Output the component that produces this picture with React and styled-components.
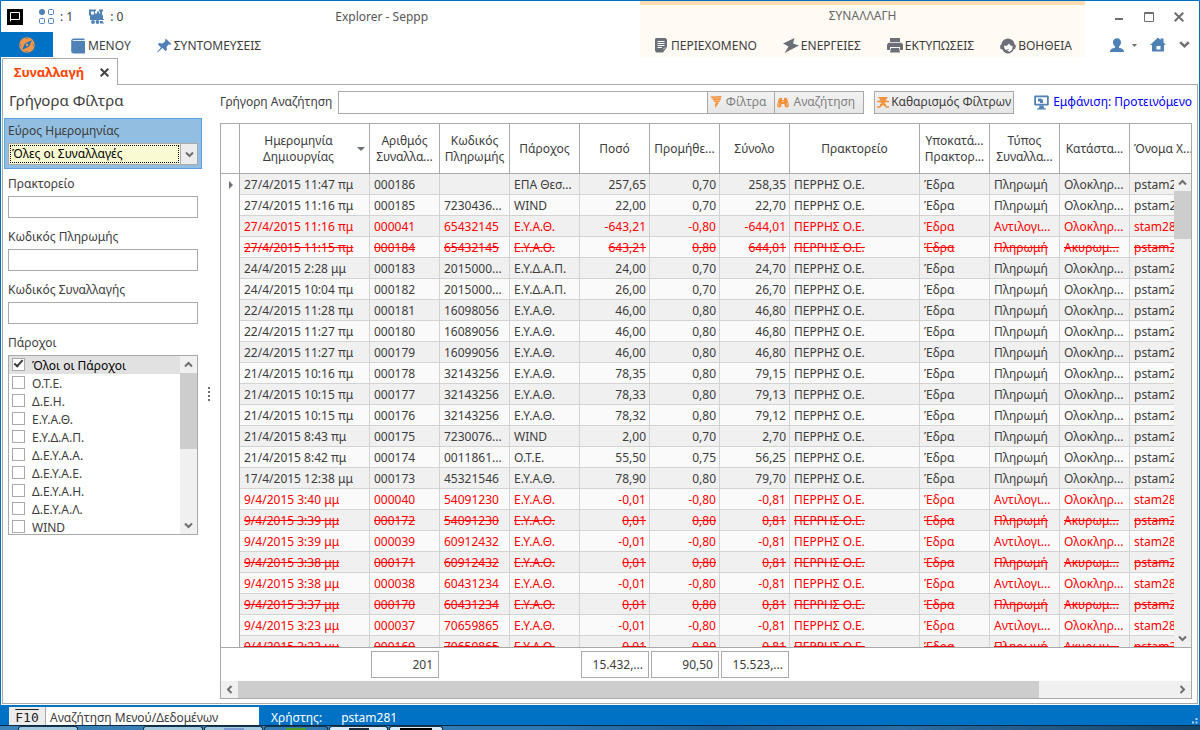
import React from "react";
import styled, { createGlobalStyle, css } from "styled-components";

const c = {
  blue: "#0072c6",
  line: "#a9a9a9",
  cellLine: "#d3d3d3",
  text: "#3c3c3c",
  icon: "#4f81b5",
  gray: "#6b7078",
  orange: "#f0923e",
  track: "#f0f0f0",
  thumb: "#cdcdcd",
};

const Global = createGlobalStyle`
  *, *::before, *::after { box-sizing: border-box; }
  body { margin: 0; background: #fff; }
  body, button, input, select, table {
    font: 12px/16px "Noto Sans", "DejaVu Sans", sans-serif;
    color: ${c.text};
  }
  button { margin: 0; padding: 0; border: 0; background: none; }
  svg { display: block; flex: none; }
`;

const Desktop = styled.div`
  display: flex;
  flex-direction: column;
  height: 100vh;
  min-height: 480px;
  overflow: hidden;
`;

const AppWindow = styled.div`
  flex: 1;
  min-height: 0;
  display: flex;
  flex-direction: column;
  border: solid ${c.blue};
  border-width: 1px 1px 0;
`;

/* ---------- title bar and ribbon ---------- */

const Header = styled.header`
  display: flex;
  height: 56px;
`;

const HeaderMain = styled.div`
  flex: 1;
  min-width: 0;
`;

const TitleBar = styled.div`
  display: flex;
  align-items: center;
  height: 31px;
  padding-left: 6px;
`;

const Counter = styled.span`
  display: flex;
  align-items: center;
  gap: 6px;
  margin-left: 16px;
`;

const WindowTitle = styled.h1`
  flex: 1;
  margin: 0;
  text-align: center;
  font-size: 12px;
  line-height: 16px;
  font-weight: 400;
  color: #555;
`;

const MenuBar = styled.nav`
  display: flex;
  align-items: center;
  height: 25px;
`;

const StartButton = styled.button`
  display: grid;
  place-items: center;
  width: 52px;
  height: 25px;
  background: ${c.blue};
`;

const MenuButton = styled.button`
  display: flex;
  align-items: center;
  gap: ${(p) => p.$gap || 2}px;
  margin-left: ${(p) => p.$before || 0}px;
  padding-top: 2px;
  white-space: nowrap;
`;

const ContextRibbon = styled.div`
  width: 445px;
  border-top: 4px solid #ffdcb2;
  background: #fffaf3;
`;

const ContextTitle = styled.div`
  height: 27px;
  padding-top: 3px;
  text-align: center;
  color: #666;
`;

const ContextMenu = styled.nav`
  display: flex;
  align-items: center;
  justify-content: space-between;
  height: 25px;
  padding: 0 13px 0 14px;
`;

const HeaderTools = styled.div`
  width: 114px;
`;

const ToolRow = styled.div`
  display: flex;
  align-items: center;
  justify-content: space-between;
  height: ${(p) => p.$height}px;
  padding: 0 ${(p) => p.$right}px 0 ${(p) => p.$left}px;
`;

/* ---------- tabs and work area ---------- */

const TabStrip = styled.div`
  display: flex;
  height: 28px;
  padding: 1px 1px 0;
`;

const Tab = styled.div`
  display: flex;
  align-items: center;
  justify-content: space-between;
  width: 116px;
  padding: 0 8px 0 11px;
  border: 1px solid ${c.line};
  border-bottom: 0;
`;

const TabLabel = styled.strong`
  font-size: 13px;
  color: #ff4500;
`;

const TabRest = styled.div`
  flex: 1;
  border-bottom: 1px solid ${c.line};
`;

const WorkArea = styled.main`
  flex: 1;
  min-height: 0;
  display: flex;
  margin: 0 1px 1px;
  border: 1px solid ${c.line};
  border-top: 0;
`;

/* ---------- filters ---------- */

const Filters = styled.aside`
  width: 199px;
  padding-left: 1px;
`;

const FiltersTitle = styled.h2`
  height: 33px;
  margin: 0;
  padding: 4px 0 0 5px;
  font-size: 15px;
  line-height: 22px;
  font-weight: 400;
`;

const FieldGroup = styled.div`
  display: flex;
  flex-direction: column;
  gap: 4px;
  padding: 4px 3px 3px;
  border: 1px solid transparent;
  ${(p) =>
    p.$active &&
    css`
      border-color: #5e9fe2;
      background: #92bfe1;
    `}
  & + & {
    padding-top: 6px;
  }
`;

const TextInput = styled.input`
  width: 190px;
  height: 22px;
  padding: 0 3px;
  border: 1px solid ${c.line};
  background: #fff;
  outline: none;
`;

const SelectBox = styled.div`
  display: flex;
  width: 190px;
  height: 22px;
  border: 1px solid ${c.line};
  background: #fafad2;
`;

const Select = styled.select`
  flex: 1;
  min-width: 0;
  appearance: none;
  margin: 1px;
  padding: 0 1px;
  border: 1px dotted #000;
  border-radius: 0;
  background: #fafad2;
  color: #000;
  outline: none;
`;

const SelectArrow = styled.span`
  display: grid;
  place-items: center;
  width: 17px;
  border-left: 1px solid ${c.line};
  background: #ececec;
`;

const ListBox = styled.div`
  display: flex;
  width: 190px;
  height: 180px;
  border: 1px solid ${c.line};
`;

const Items = styled.div`
  flex: 1;
  overflow: hidden;
`;

const Item = styled.label`
  display: flex;
  gap: 7px;
  height: 18px;
  padding-left: 3px;
  line-height: 20px;
  ${(p) =>
    p.$selected &&
    css`
      background: #e1e1e1;
      color: #000;
    `}
`;

const Check = styled.input`
  appearance: none;
  position: relative;
  width: 13px;
  height: 13px;
  margin: 2px 0 0;
  border: 1px solid ${c.line};
  background: #fff;
  &:checked::after {
    content: "";
    position: absolute;
    left: 1px;
    top: 1px;
    width: 9px;
    height: 5px;
    border: solid #3c3c3c;
    border-width: 0 0 2px 2px;
    transform: rotate(-48deg);
  }
`;

const Splitter = styled.div`
  display: flex;
  flex-direction: column;
  justify-content: center;
  align-items: center;
  gap: 2px;
  width: 18px;
  padding-right: 4px;
`;

const Dot = styled.i`
  width: 2px;
  height: 2px;
  background: ${c.gray};
`;

/* ---------- scroll bars ---------- */

const ScrollBar = styled.div`
  display: flex;
  flex-direction: ${(p) => (p.$horizontal ? "row" : "column")};
  ${(p) => (p.$horizontal ? "height: 17px;" : "width: 17px;")}
  background: ${c.track};
`;

const ScrollArrow = styled.button`
  display: grid;
  place-items: center;
  width: 17px;
  height: 17px;
`;

const ScrollTrack = styled.div`
  flex: 1;
  display: flex;
  flex-direction: inherit;
`;

const ScrollThumb = styled.div`
  flex: 0 0 ${(p) => p.$size}%;
  background: ${c.thumb};
`;

/* ---------- search bar ---------- */

const Content = styled.section`
  flex: 1;
  min-width: 0;
  display: flex;
  flex-direction: column;
  padding: 5px 5px 4px 0;
`;

const SearchBar = styled.form`
  display: flex;
  align-items: center;
  height: 24px;
  margin-bottom: 9px;
`;

const SearchLabel = styled.label`
  width: 118px;
  white-space: nowrap;
`;

const SearchInput = styled.input`
  flex: 1;
  min-width: 0;
  height: 23px;
  padding: 0 4px;
  border: 1px solid ${c.line};
  outline: none;
`;

const PushButton = styled.button`
  display: flex;
  align-items: center;
  gap: ${(p) => p.$gap || 4}px;
  height: 23px;
  padding: 0 ${(p) => p.$right || 8}px 0 2px;
  margin-left: ${(p) => (p.$apart ? 10 : -1)}px;
  border: 1px solid ${c.line};
  background: linear-gradient(#f2f2f2, #e6e6e6);
  color: ${(p) => (p.$apart ? c.text : "#808080")};
  white-space: nowrap;
`;

const ViewLink = styled.a`
  display: flex;
  align-items: center;
  gap: 4px;
  margin-left: 20px;
  color: #00f;
  text-decoration: none;
  white-space: nowrap;
`;

/* ---------- grid ---------- */

const GridFrame = styled.div`
  flex: 1;
  min-height: 0;
  display: flex;
  flex-direction: column;
  border: 1px solid ${c.line};
`;

const GridBody = styled.div`
  position: relative;
  flex: 1;
  min-height: 0;
  overflow: hidden;
  border-bottom: 1px solid ${c.line};
`;

const GridScroll = styled(ScrollBar)`
  position: absolute;
  top: 50px;
  right: 0;
  bottom: 0;
`;

const Table = styled.table`
  table-layout: fixed;
  width: 100%;
  min-width: 979px;
  border-collapse: separate;
  border-spacing: 0;
`;

const Col = styled.col`
  width: ${(p) => (p.$width ? `${p.$width}px` : "auto")};
`;

const HeadCell = styled.th`
  position: relative;
  height: 50px;
  padding: ${(p) => (p.$sorted ? "0 16px 0 4px" : "0 2px")};
  border: solid ${c.line};
  border-width: 0 1px 1px 0;
  background: #fff;
  font-weight: 400;
  text-align: center;
  white-space: pre;
  overflow: hidden;
  &:last-child {
    padding-left: 4px;
    text-align: left;
  }
`;

const SortMark = styled.i`
  position: absolute;
  right: 4px;
  top: 23px;
  border: 4px solid transparent;
  border-top-color: ${c.gray};
  border-bottom: 0;
`;

const Row = styled.tr`
  background: #fafafa;
  &:nth-child(odd) {
    background: #f0f0f0;
  }
  ${(p) =>
    p.$kind &&
    css`
      color: #f00;
    `}
  ${(p) =>
    p.$kind === "void" &&
    css`
      text-decoration: line-through;
    `}
`;

const Cell = styled.td`
  height: 21px;
  padding: 2px ${(p) => (p.$num ? 3 : 2)}px 0 4px;
  border: solid ${c.cellLine};
  border-width: 0 1px 1px 0;
  text-align: ${(p) => (p.$num ? "right" : "left")};
  white-space: nowrap;
  overflow: hidden;
`;

const RowMark = styled.td`
  width: 19px;
  padding: 0 0 0 8px;
  border-right: 1px solid ${c.line};
  background: #fff;
`;

const Pointer = styled.i`
  display: block;
  width: 4px;
  border: 4px solid transparent;
  border-left-color: ${c.gray};
  border-right: 0;
`;

const Summary = styled.div`
  display: grid;
  grid-template-columns: 149px 70px 140px 70px 70px 70px;
  align-items: center;
  height: 33px;
  overflow: hidden;
`;

const Total = styled.output`
  grid-column: ${(p) => p.$column};
  height: 27px;
  margin: 0 1px;
  padding: 0 5px;
  border: 1px solid ${c.line};
  line-height: 25px;
  text-align: right;
`;

/* ---------- status bar and desktop taskbar ---------- */

const StatusBar = styled.footer`
  display: flex;
  height: 20px;
  padding: 2px 1px 0 8px;
  background: ${c.blue};
  color: #fff;
`;

const KeyHint = styled.label`
  width: 37px;
  padding-top: 4px;
  border-right: 1px solid ${c.line};
  background: #ececec;
  font: 13px/14px "DejaVu Sans Mono", monospace;
  text-align: center;
  text-decoration: overline;
  color: #222;
`;

const CommandInput = styled.input`
  width: 213px;
  padding: 4px 4px 0;
  border: 0;
  outline: none;
  line-height: 14px;
  &::placeholder {
    color: ${c.text};
    opacity: 1;
  }
`;

const StatusText = styled.span`
  margin-left: ${(p) => p.$before}px;
  padding-top: 3px;
`;

const Grip = styled.div`
  align-self: flex-end;
  margin: 0 0 1px auto;
`;

const Taskbar = styled.div`
  display: flex;
  gap: 1px;
  height: 5px;
  padding-left: 18px;
  border-top: 1px solid #0b2c49;
  background: linear-gradient(90deg, #3d83b8, #2e78b2 45%, #1d5c94 60%, #2b6da4 75%, #164468);
`;

const Task = styled.div`
  display: flex;
  justify-content: center;
  width: ${(p) => p.$width}px;
  margin-left: ${(p) => p.$before || 0}px;
  border: 1px solid #16384f;
  border-bottom: 0;
  border-radius: 3px 3px 0 0;
  background: ${(p) => p.$tone || "#a9cbe0"};
`;

const TaskMark = styled.i`
  width: ${(p) => p.$width || 20}px;
  height: 2px;
  margin-top: 1px;
  background: ${(p) => p.$color};
`;

/* ---------- icons ---------- */

const Chevron = ({ turn = 0, size = 9 }) => (
  <svg width={size} height={size} viewBox="0 0 9 9" fill="none" stroke="#6e6e6e" strokeWidth="2">
    <path d="M1 2.5 4.5 6 8 2.5" transform={`rotate(${turn} 4.5 4.5)`} />
  </svg>
);

const AppIcon = () => (
  <svg width="16" height="16" viewBox="0 0 16 16">
    <path fill="#000" d="M0 0h16v16H0z" />
    <path fill="none" stroke="#fff" d="M3.500 12.500v-9h9v7h-9" />
  </svg>
);

const TilesIcon = () => (
  <svg width="15" height="15" viewBox="0 0 15 15" fill="none" stroke={c.icon}>
    <circle cx="3" cy="3" r="3" fill={c.icon} stroke="none" />
    <rect x="9.500" y=".5" width="5" height="5" rx="1" />
    <rect x=".5" y="9.500" width="5" height="5" rx="1" />
    <rect x="9.500" y="9.500" width="5" height="5" rx="1" />
  </svg>
);

const TrainIcon = () => (
  <svg width="15" height="15" viewBox="0 0 15 15" fill={c.icon}>
    <path fillRule="evenodd" d="M0 .5h7V2H6v2.500h2V2.500h2v2h1V2.500h-1V.5h4v2h-1v3l1 1V10h1v1H1V6.500H0zM2 2.500v3h3v-3z" />
    <circle cx="4" cy="13" r="1.900" />
    <circle cx="8.500" cy="13" r="1.900" />
    <path d="M11 12h2.500l1.500 2.500h-4z" />
  </svg>
);

const CompassIcon = () => (
  <svg width="16" height="16" viewBox="0 0 16 16">
    <circle cx="8" cy="8" r="7.800" fill="#ef9448" />
    <path fill={c.blue} fillRule="evenodd" d="M12.800 3.200 10 9.500 3.200 12.800 6 6.500zM8 6.600a1.400 1.400 0 1 0 0 2.800 1.400 1.400 0 0 0 0-2.800z" />
    <path stroke={c.blue} d="M8 1v1M8 14v1M1 8h1M14 8h1" />
  </svg>
);

const BookIcon = () => (
  <svg width="14" height="16" viewBox="0 0 14 16">
    <path fill={c.icon} d="M3 .5h10.500V2H3Q1.500 2 1.500 3H14v12.500H3Q.2 15.500.2 13V3Q.2.5 3 .5z" />
    <path stroke="#dce8f4" d="M2.500 2.500H13" />
  </svg>
);

const PinIcon = () => (
  <svg width="15" height="15" viewBox="0 0 15 15" fill={c.icon}>
    <path d="m8.500.5 6 5.500-1.500.8-1.500-.3-2 2.500.5 3-1.500 1-3-3L.3 14.500 0 14l4-4.500-3-3 1-1.500 3.500.5L8 3.500z" />
  </svg>
);

const PageIcon = () => (
  <svg width="14" height="15" viewBox="0 0 14 15">
    <path fill={c.gray} d="M2 0h9.500L13 1.500V9l-4 5.500H2.500L1 13V1z" />
    <path stroke="#fff" d="M3.500 3.500h7M3.500 5.500h7M3.500 7.500h7M3.500 9.500H8" />
    <path fill="#fff" d="M9 14.500 9.500 10 13 9.500 9.500 10.700z" />
  </svg>
);

const BoltIcon = () => (
  <svg width="16" height="15" viewBox="0 0 16 15" fill={c.gray}>
    <path d="M11.500 0 0 5.500l5.500 3-4 6.500L16 7.500 10 5.500z" />
  </svg>
);

const PrinterIcon = () => (
  <svg width="16" height="15" viewBox="0 0 16 15" fill={c.gray}>
    <path d="M3 0h10v4H3zM1.500 4.800h13L16 6.500V12h-3V9H3v3H0V6.500z" />
    <path d="M4 10h8l1 4.500H3z" />
  </svg>
);

const SupportIcon = () => (
  <svg width="16" height="16" viewBox="0 0 16 16">
    <path fill={c.gray} d="M8 .5A6.500 6.500 0 0 1 14.500 6L16 8l-1 3-1.500.5A6.500 6.500 0 0 1 8 15.500a6.500 6.500 0 0 1-5.500-4L.5 11 0 8l1.500-2A6.500 6.500 0 0 1 8 .5z" />
    <path fill="#fff" d="M4 7.500Q7 9 9 5.500q1 2.500 3.500 2.500v2a4.500 4.500 0 0 1-3 3.700L7 12.500l2-1v-.8L5.500 12Q4 10.500 4 7.500z" />
  </svg>
);

const UserIcon = () => (
  <svg width="14" height="15" viewBox="0 0 14 15" fill={c.icon}>
    <path d="M7 .3c2.500 0 4 1.700 4 4 0 2-1 3.500-2 4.200v1.200c2.500.5 5 1.300 5 4.300H0c0-3 2.500-3.800 5-4.300V8.500C4 7.800 3 6.300 3 4.300c0-2.300 1.500-4 4-4z" />
  </svg>
);

const HomeIcon = () => (
  <svg width="16" height="15" viewBox="0 0 16 15">
    <path fill={c.icon} d="M8 .5 10.500 3V1.500h3V5.500L16 8h-2v6.500H2V8H0z" />
    <path fill="#fff" d="M6.500 9h4v3.500h-4z" />
  </svg>
);

const FunnelIcon = () => (
  <svg width="12" height="12" viewBox="0 0 12 12">
    <path fill={c.orange} d="M.5.5 11.500 0 10.500 4 7.500 9l-2.500 3 .3-5z" />
    <path stroke="#fbe3cd" strokeWidth=".5" d="m1 2.500 10-.8M3 4.800l7-.6M4.500 6.900l4.500-.5" />
  </svg>
);

const BinocularsIcon = () => (
  <svg width="12" height="11" viewBox="0 0 12 11">
    <path fill={c.orange} d="M2 1.500C2 .5 5 .3 5 1.500V3h2V1.500C7 .3 10 .5 10 1.500L12 8q0 2.500-2.300 2.500T7.500 8V7h-3v1q0 2.500-2.200 2.500T0 8z" />
    <path stroke="#fbe3cd" strokeWidth=".7" d="M1.800 6v3M10.200 6v3M5 4.500h2" />
  </svg>
);

const ClearIcon = () => (
  <svg width="12" height="11" viewBox="0 0 12 11" fill={c.orange} stroke={c.orange}>
    <path stroke="none" d="M1 0h10L8 4H4z" />
    <path fill="none" strokeWidth="1.500" d="M0 4.500h12M2 10.500l7.500-7M10 10.500 2.500 3.500M3 7.500h6M0 10h3M9 10h3" />
  </svg>
);

const MonitorIcon = () => (
  <svg width="15" height="15" viewBox="0 0 15 15" fill={c.icon}>
    <path fillRule="evenodd" d="M1 .5h13l.8.8v8.400l-.8.800H1l-.8-.8V1.300zM2 2.300v6.400h11V2.300z" />
    <path d="M4 3.500h3.500v1H9v3.500H6V6.500H4zM5.500 10.500h4L10 13l2 .8v.7H3v-.7l2-.8z" />
  </svg>
);

const GripIcon = () => (
  <svg width="6" height="6" viewBox="0 0 6 6" fill="#b9d3ea">
    <path d="M3.500 0h2v2h-2zM0 3.500h2v2H0zM3.500 3.500h2v2h-2z" />
  </svg>
);

/* ---------- data ---------- */

const columns = [
  ["Ημερομηνία\nΔημιουργίας", 130],
  ["Αριθμός\nΣυναλλα...", 70],
  ["Κωδικός\nΠληρωμής", 70],
  ["Πάροχος", 70],
  ["Ποσό", 70],
  ["Προμήθε...", 70],
  ["Σύνολο", 70],
  ["Πρακτορείο", 130],
  ["Υποκατά...\nΠρακτορ...", 70],
  ["Τύπος\nΣυναλλα...", 70],
  ["Κατάστα...", 70],
  ["Όνομα Χ...", 0],
];

/* date, number, payment code, provider, amount, fee, total, kind */
const records = [
  ["27/4/2015 11:47 πμ", "000186", "", "ΕΠΑ Θεσ...", "257,65", "0,70", "258,35"],
  ["27/4/2015 11:16 πμ", "000185", "7230436...", "WIND", "22,00", "0,70", "22,70"],
  ["27/4/2015 11:16 πμ", "000041", "65432145", "Ε.Υ.Α.Θ.", "-643,21", "-0,80", "-644,01", "reversal"],
  ["27/4/2015 11:15 πμ", "000184", "65432145", "Ε.Υ.Α.Θ.", "643,21", "0,80", "644,01", "void"],
  ["24/4/2015 2:28 μμ", "000183", "2015000...", "Ε.Υ.Δ.Α.Π.", "24,00", "0,70", "24,70"],
  ["24/4/2015 10:04 πμ", "000182", "2015000...", "Ε.Υ.Δ.Α.Π.", "26,00", "0,70", "26,70"],
  ["22/4/2015 11:28 πμ", "000181", "16098056", "Ε.Υ.Α.Θ.", "46,00", "0,80", "46,80"],
  ["22/4/2015 11:27 πμ", "000180", "16089056", "Ε.Υ.Α.Θ.", "46,00", "0,80", "46,80"],
  ["22/4/2015 11:27 πμ", "000179", "16099056", "Ε.Υ.Α.Θ.", "46,00", "0,80", "46,80"],
  ["21/4/2015 10:16 πμ", "000178", "32143256", "Ε.Υ.Α.Θ.", "78,35", "0,80", "79,15"],
  ["21/4/2015 10:15 πμ", "000177", "32143256", "Ε.Υ.Α.Θ.", "78,33", "0,80", "79,13"],
  ["21/4/2015 10:15 πμ", "000176", "32143256", "Ε.Υ.Α.Θ.", "78,32", "0,80", "79,12"],
  ["21/4/2015 8:43 πμ", "000175", "7230076...", "WIND", "2,00", "0,70", "2,70"],
  ["21/4/2015 8:42 πμ", "000174", "0011861...", "Ο.Τ.Ε.", "55,50", "0,75", "56,25"],
  ["17/4/2015 12:38 μμ", "000173", "45321546", "Ε.Υ.Α.Θ.", "78,90", "0,80", "79,70"],
  ["9/4/2015 3:40 μμ", "000040", "54091230", "Ε.Υ.Α.Θ.", "-0,01", "-0,80", "-0,81", "reversal"],
  ["9/4/2015 3:39 μμ", "000172", "54091230", "Ε.Υ.Α.Θ.", "0,01", "0,80", "0,81", "void"],
  ["9/4/2015 3:39 μμ", "000039", "60912432", "Ε.Υ.Α.Θ.", "-0,01", "-0,80", "-0,81", "reversal"],
  ["9/4/2015 3:38 μμ", "000171", "60912432", "Ε.Υ.Α.Θ.", "0,01", "0,80", "0,81", "void"],
  ["9/4/2015 3:38 μμ", "000038", "60431234", "Ε.Υ.Α.Θ.", "-0,01", "-0,80", "-0,81", "reversal"],
  ["9/4/2015 3:37 μμ", "000170", "60431234", "Ε.Υ.Α.Θ.", "0,01", "0,80", "0,81", "void"],
  ["9/4/2015 3:23 μμ", "000037", "70659865", "Ε.Υ.Α.Θ.", "-0,01", "-0,80", "-0,81", "reversal"],
  ["9/4/2015 3:23 μμ", "000169", "70659865", "Ε.Υ.Α.Θ.", "0,01", "0,80", "0,81", "void"],
];

const providers = [
  "Όλοι οι Πάροχοι",
  "Ο.Τ.Ε.",
  "Δ.Ε.Η.",
  "Ε.Υ.Α.Θ.",
  "Ε.Υ.Δ.Α.Π.",
  "Δ.Ε.Υ.Α.Α.",
  "Δ.Ε.Υ.Α.Ε.",
  "Δ.Ε.Υ.Α.Η.",
  "Δ.Ε.Υ.Α.Λ.",
  "WIND",
];

const toCells = (r) => [
  ...r.slice(0, 7),
  "ΠΕΡΡΗΣ Ο.Ε.",
  "Έδρα",
  r[7] === "reversal" ? "Αντιλογι..." : "Πληρωμή",
  r[7] === "void" ? "Ακυρωμ..." : "Ολοκληρ...",
  r[7] === "reversal" ? "stam281" : "pstam281",
];

/* ---------- parts ---------- */

function AppHeader() {
  return (
    <Header>
      <HeaderMain>
        <TitleBar>
          <AppIcon />
          <Counter><TilesIcon />: 1</Counter>
          <Counter><TrainIcon />: 0</Counter>
          <WindowTitle>Explorer - Seppp</WindowTitle>
        </TitleBar>
        <MenuBar>
          <StartButton aria-label="Explorer"><CompassIcon /></StartButton>
          <MenuButton $before={18} $gap={3}><BookIcon />ΜΕΝΟΥ</MenuButton>
          <MenuButton $before={26}><PinIcon />ΣΥΝΤΟΜΕΥΣΕΙΣ</MenuButton>
        </MenuBar>
      </HeaderMain>
      <ContextRibbon>
        <ContextTitle>ΣΥΝΑΛΛΑΓΗ</ContextTitle>
        <ContextMenu>
          <MenuButton $gap={3}><PageIcon />ΠΕΡΙΕΧΟΜΕΝΟ</MenuButton>
          <MenuButton><BoltIcon />ΕΝΕΡΓΕΙΕΣ</MenuButton>
          <MenuButton><PrinterIcon />ΕΚΤΥΠΩΣΕΙΣ</MenuButton>
          <MenuButton><SupportIcon />ΒΟΗΘΕΙΑ</MenuButton>
        </ContextMenu>
      </ContextRibbon>
      <HeaderTools>
        <ToolRow $height={31} $left={29} $right={15}>
          <button aria-label="Minimize">
            <svg width="10" height="12" viewBox="0 0 10 12"><path d="M1 8h8" stroke="#6e6e6e" strokeWidth="2" /></svg>
          </button>
          <button aria-label="Maximize">
            <svg width="10" height="10" viewBox="0 0 10 10" fill="none" stroke="#6e6e6e"><path d="M.5.5h9v9h-9zM0 1.500h10" /></svg>
          </button>
          <button aria-label="Close">
            <svg width="10" height="10" viewBox="0 0 10 10" stroke="#6e6e6e" strokeWidth="2"><path d="m.7.7 8.600 8.600M9.300.7.7 9.300" /></svg>
          </button>
        </ToolRow>
        <ToolRow $height={25} $left={25} $right={9}>
          <MenuButton aria-label="User" $gap={8}>
            <UserIcon />
            <svg width="5" height="3" viewBox="0 0 5 3"><path fill="#6e6e6e" d="M0 0h5L2.500 3z" /></svg>
          </MenuButton>
          <button aria-label="Home"><HomeIcon /></button>
          <button aria-label="Collapse"><Chevron size={11} /></button>
        </ToolRow>
      </HeaderTools>
    </Header>
  );
}

function FilterPanel() {
  return (
    <Filters>
      <FiltersTitle>Γρήγορα Φίλτρα</FiltersTitle>
      <FieldGroup $active>
        <label htmlFor="range">Εύρος Ημερομηνίας</label>
        <SelectBox>
          <Select id="range"><option>Όλες οι Συναλλαγές</option></Select>
          <SelectArrow><Chevron /></SelectArrow>
        </SelectBox>
      </FieldGroup>
      {["Πρακτορείο", "Κωδικός Πληρωμής", "Κωδικός Συναλλαγής"].map((name, i) => (
        <FieldGroup key={name}>
          <label htmlFor={`filter-${i}`}>{name}</label>
          <TextInput id={`filter-${i}`} />
        </FieldGroup>
      ))}
      <FieldGroup>
        <span id="providers">Πάροχοι</span>
        <ListBox role="group" aria-labelledby="providers">
          <Items>
            {providers.map((name, i) => (
              <Item key={name} $selected={i === 0}>
                <Check type="checkbox" defaultChecked={i === 0} />
                {name}
              </Item>
            ))}
          </Items>
          <ScrollBar>
            <ScrollArrow aria-label="Scroll up"><Chevron turn={180} /></ScrollArrow>
            <ScrollTrack><ScrollThumb $size={53} /></ScrollTrack>
            <ScrollArrow aria-label="Scroll down"><Chevron /></ScrollArrow>
          </ScrollBar>
        </ListBox>
      </FieldGroup>
    </Filters>
  );
}

function DataGrid() {
  return (
    <GridFrame>
      <GridBody>
        <Table>
          <colgroup>
            <Col $width={19} />
            {columns.map(([name, width]) => <Col key={name} $width={width} />)}
          </colgroup>
          <thead>
            <tr>
              <HeadCell aria-label="Row" />
              {columns.map(([name], i) => (
                <HeadCell key={name} $sorted={i === 0}>
                  {name}
                  {i === 0 && <SortMark />}
                </HeadCell>
              ))}
            </tr>
          </thead>
          <tbody>
            {records.map((r, n) => (
              <Row key={r[1]} $kind={r[7]}>
                <RowMark>{n === 0 && <Pointer />}</RowMark>
                {toCells(r).map((value, i) => (
                  <Cell key={i} $num={i > 3 && i < 7}>{value}</Cell>
                ))}
              </Row>
            ))}
          </tbody>
        </Table>
        <GridScroll>
          <ScrollArrow aria-label="Scroll up"><Chevron turn={180} /></ScrollArrow>
          <ScrollTrack><ScrollThumb $size={11} /></ScrollTrack>
          <ScrollArrow aria-label="Scroll down"><Chevron /></ScrollArrow>
        </GridScroll>
      </GridBody>
      <Summary>
        <Total $column={2}>201</Total>
        <Total $column={4}>15.432,...</Total>
        <Total $column={5}>90,50</Total>
        <Total $column={6}>15.523,...</Total>
      </Summary>
      <ScrollBar $horizontal>
        <ScrollArrow aria-label="Scroll left"><Chevron turn={90} /></ScrollArrow>
        <ScrollTrack><ScrollThumb $size={85.6} /></ScrollTrack>
        <ScrollArrow aria-label="Scroll right"><Chevron turn={-90} /></ScrollArrow>
      </ScrollBar>
    </GridFrame>
  );
}

export default function App() {
  return (
    <Desktop>
      <Global />
      <AppWindow>
        <AppHeader />
        <TabStrip>
          <Tab>
            <TabLabel>Συναλλαγή</TabLabel>
            <button aria-label="Close tab">
              <svg width="9" height="9" viewBox="0 0 9 9" stroke="#444" strokeWidth="2"><path d="m.7.7 7.600 7.600M8.300.7.7 8.300" /></svg>
            </button>
          </Tab>
          <TabRest />
        </TabStrip>
        <WorkArea>
          <FilterPanel />
          <Splitter>
            <Dot /><Dot /><Dot /><Dot />
          </Splitter>
          <Content>
            <SearchBar onSubmit={(e) => e.preventDefault()}>
              <SearchLabel htmlFor="search">Γρήγορη Αναζήτηση</SearchLabel>
              <SearchInput id="search" />
              <PushButton type="button"><FunnelIcon />Φίλτρα</PushButton>
              <PushButton type="submit"><BinocularsIcon />Αναζήτηση</PushButton>
              <PushButton type="button" $apart $gap={2} $right={2}><ClearIcon />Καθαρισμός Φίλτρων</PushButton>
              <ViewLink href="#view"><MonitorIcon />Εμφάνιση: Προτεινόμενο</ViewLink>
            </SearchBar>
            <DataGrid />
          </Content>
        </WorkArea>
        <StatusBar>
          <KeyHint htmlFor="command">F10</KeyHint>
          <CommandInput id="command" placeholder="Αναζήτηση Μενού/Δεδομένων" />
          <StatusText $before={12}>Χρήστης:</StatusText>
          <StatusText $before={19}>pstam281</StatusText>
          <Grip><GripIcon /></Grip>
        </StatusBar>
      </AppWindow>
      <Taskbar>
        <Task $width={60} />
        <Task $width={60} $before={64} />
        <Task $width={59}><TaskMark $color="#7f9cd0" /></Task>
        <Task $width={64} $tone="transparent"><TaskMark $color="#4f9c2e" /></Task>
        <Task $width={59} $tone="#dcebf5"><TaskMark $color="#1c2b36" /></Task>
        <Task $width={54} $tone="#dcebf5"><TaskMark $color="#000" $width={32} /></Task>
      </Taskbar>
    </Desktop>
  );
}
